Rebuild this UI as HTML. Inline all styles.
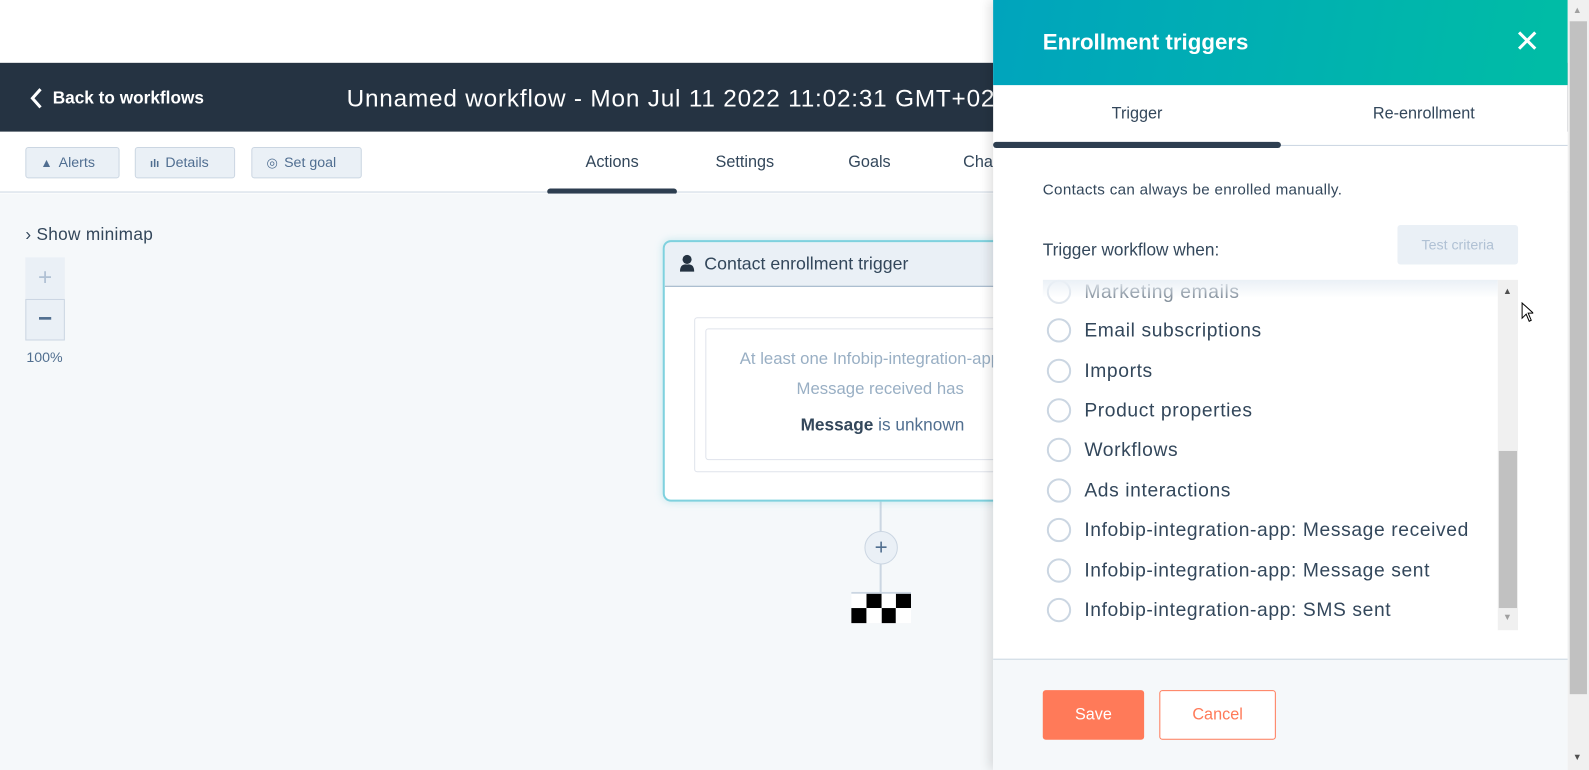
<!DOCTYPE html>
<html><head><meta charset="utf-8"><style>
*{margin:0;padding:0;box-sizing:border-box}
html,body{width:1589px;height:770px;overflow:hidden;background:#fff;font-family:"Liberation Sans",sans-serif}
#s{position:absolute;left:0;top:0;width:1568px;height:760px;transform:scale(1.01339);transform-origin:0 0;background:#fff}
.a{position:absolute}
.btn{position:absolute;top:145px;height:31px;background:#eaf0f6;border:1px solid #cbd6e2;border-radius:3px;color:#506e91;font-size:14px;line-height:29px;padding-left:14px}
.tab{position:absolute;top:152px;font-size:16px;color:#33475b;transform:translateX(-50%);white-space:nowrap}
.it{position:absolute;left:0;height:30px;font-size:19px;letter-spacing:0.6px;color:#33475b;line-height:24px}
.it i{position:absolute;left:4px;top:0;width:24px;height:24px;border:2px solid #cbd6e2;border-radius:50%}
.it span{position:absolute;left:41px;top:1px;white-space:nowrap}
</style></head><body><div id="s">
<div class="a" style="left:0;top:62px;width:1568px;height:68px;background:#253342"></div>
<svg class="a" style="left:28px;top:86px" width="16" height="22"><path d="M12 2 L4 11 L12 20" stroke="#fff" stroke-width="3" fill="none"/></svg>
<div class="a" style="left:52px;top:87px;color:#fff;font-weight:bold;font-size:17px">Back to workflows</div>
<div class="a" style="left:342px;top:84px;color:#fff;font-size:24px;letter-spacing:0.8px;white-space:nowrap">Unnamed workflow - Mon Jul 11 2022 11:02:31 GMT+02</div>
<div class="a" style="left:0;top:130px;width:1568px;height:60px;background:#fff;border-bottom:1px solid #cbd6e2"></div>
<div class="btn" style="left:25px;width:93px"><span style="font-size:12px;margin-right:6px">▲</span>Alerts</div>
<div class="btn" style="left:133px;width:99px"><span style="font-size:11px;margin-right:6px;font-weight:bold">ılı</span>Details</div>
<div class="btn" style="left:248px;width:109px"><span style="font-size:13px;margin-right:6px">◎</span>Set goal</div>
<div class="tab" style="left:604px">Actions</div>
<div class="tab" style="left:735px">Settings</div>
<div class="tab" style="left:858px">Goals</div>
<div class="tab" style="left:970px">Chart</div>
<div class="a" style="left:540px;top:186px;width:128px;height:6px;border-radius:3px;background:#2d3e50"></div>
<div class="a" style="left:0;top:191px;width:1568px;height:569px;background:#f5f8fa"></div>
<div class="a" style="left:25px;top:222px;font-size:17px;letter-spacing:0.3px;color:#33475b">› Show minimap</div>
<div class="a" style="left:25px;top:254px;width:39px;height:41px;background:#eaf0f6;color:#b0c1d4;font-size:24px;text-align:center;line-height:40px">+</div>
<div class="a" style="left:25px;top:295px;width:39px;height:41px;background:#eaf0f6;border:1px solid #cbd6e2;color:#516f90;font-size:24px;text-align:center;line-height:38px;font-weight:bold">−</div>
<div class="a" style="left:26px;top:344px;font-size:14px;color:#516f90">100%</div>
<div class="a" style="left:868px;top:495px;width:2px;height:90px;background:#cbd6e2"></div>
<div class="a" style="left:853px;top:524px;width:33px;height:33px;border-radius:50%;background:#eaf0f6;border:1px solid #cbd6e2;text-align:center;line-height:29px;font-size:22px;color:#516f90">+</div>
<svg class="a" style="left:840px;top:584px" width="59" height="31"><rect width="59" height="2" fill="#cbd6e2"/><rect x="15" y="2" width="15" height="14"/><rect x="44" y="2" width="15" height="14"/><rect x="0" y="16" width="15" height="15"/><rect x="30" y="16" width="14" height="15"/><rect x="0" y="2" width="15" height="14" fill="#fff"/><rect x="30" y="2" width="14" height="14" fill="#fff"/><rect x="15" y="16" width="15" height="15" fill="#fff"/><rect x="44" y="16" width="15" height="15" fill="#fff"/></svg>
<div class="a" style="left:654px;top:237px;width:400px;height:258px;border:2px solid #7fd1de;border-radius:8px;background:#fff;overflow:hidden;box-shadow:0 0 8px rgba(127,209,222,.4)">
 <div class="a" style="left:0;top:0;width:400px;height:44px;background:#eaf0f6;border-bottom:1px solid #99afc4"></div>
 <svg class="a" style="left:14px;top:12px" width="16" height="18"><circle cx="8" cy="5" r="4.5" fill="#253342"/><path d="M1 17 Q1 9 8 10 Q15 9 15 17 Z" fill="#253342"/></svg>
 <div class="a" style="left:39px;top:11px;font-size:17.5px;color:#33475b">Contact enrollment trigger</div>
 <div class="a" style="left:29px;top:74px;width:400px;height:153px;border:1px solid #dfe3eb;border-radius:3px"></div>
 <div class="a" style="left:40px;top:85px;width:400px;height:130px;border:1px solid #dfe3eb;border-radius:3px"></div>
 <div class="a" style="left:74px;top:106px;font-size:16.5px;color:#99afc4;white-space:nowrap">At least one Infobip-integration-app:</div>
 <div class="a" style="left:130px;top:136px;font-size:16.5px;color:#99afc4">Message received has</div>
 <div class="a" style="left:134px;top:171px;font-size:17px;color:#516f90"><b style="color:#33475b">Message</b> is unknown</div>
</div>
<div class="a" style="left:980px;top:0;width:567px;height:760px;background:#fff;box-shadow:-4px 0 10px rgba(0,0,0,.12)"></div>
<div class="a" style="left:980px;top:0;width:567px;height:84px;background:linear-gradient(100deg,#00a4bd,#00bda5)"></div>
<div class="a" style="left:1029px;top:29px;color:#fff;font-size:22px;font-weight:bold">Enrollment triggers</div>
<svg class="a" style="left:1497px;top:30px" width="20" height="20"><path d="M2 2L18 18M18 2L2 18" stroke="#fff" stroke-width="3"/></svg>
<div class="a" style="left:980px;top:143px;width:567px;height:1px;background:#cbd6e2"></div>
<div class="a" style="left:980px;top:140px;width:284px;height:6px;border-radius:3px;background:#2d3e50"></div>
<div class="tab" style="left:1122px;top:104px">Trigger</div>
<div class="tab" style="left:1405px;top:104px">Re-enrollment</div>
<div class="a" style="left:1029px;top:179px;font-size:15px;letter-spacing:0.3px;color:#33475b">Contacts can always be enrolled manually.</div>
<div class="a" style="left:1029px;top:237px;font-size:17px;color:#33475b">Trigger workflow when:</div>
<div class="a" style="left:1379px;top:222px;width:119px;height:39px;background:#eaf0f6;border-radius:3px;color:#b0c1d4;font-size:14px;text-align:center;line-height:39px">Test criteria</div>
<div class="a" style="left:1029px;top:276px;width:469px;height:346px;overflow:hidden">
 <div class="it" style="top:0px;opacity:.6"><i></i><span>Marketing emails</span></div>
 <div class="it" style="top:38px"><i></i><span>Email subscriptions</span></div>
 <div class="it" style="top:78px"><i></i><span>Imports</span></div>
 <div class="it" style="top:117px"><i></i><span>Product properties</span></div>
 <div class="it" style="top:156px"><i></i><span>Workflows</span></div>
 <div class="it" style="top:196px"><i></i><span>Ads interactions</span></div>
 <div class="it" style="top:235px"><i></i><span>Infobip-integration-app: Message received</span></div>
 <div class="it" style="top:275px"><i></i><span>Infobip-integration-app: Message sent</span></div>
 <div class="it" style="top:314px"><i></i><span>Infobip-integration-app: SMS sent</span></div>
 <div class="a" style="left:0;top:0;width:449px;height:18px;background:linear-gradient(#eaf0f6,rgba(255,255,255,0))"></div>
 <div class="a" style="left:449px;top:0;width:20px;height:346px;background:#f0f0f0"></div>
 <div class="a" style="left:450px;top:169px;width:18px;height:155px;background:#c1c1c1"></div>
 <div class="a" style="left:454px;top:6px;font-size:9px;color:#505050">▲</div>
 <div class="a" style="left:454px;top:328px;font-size:9px;color:#a0a0a0">▼</div>
</div>
<svg class="a" style="left:1501px;top:298px" width="12" height="20"><path d="M1 1L1 16L5 12L8 19L10 18L7 11L12 11Z" fill="#fff" stroke="#000"/></svg>
<div class="a" style="left:980px;top:650px;width:567px;height:110px;background:#f5f8fa;border-top:1px solid #cbd6e2"></div>
<div class="a" style="left:1029px;top:681px;width:100px;height:49px;background:#ff7a59;border-radius:3px;color:#fff;font-size:16px;text-align:center;line-height:49px">Save</div>
<div class="a" style="left:1144px;top:681px;width:115px;height:49px;background:#fff;border:1px solid #ff7a59;border-radius:3px;color:#ff7a59;font-size:16px;text-align:center;line-height:47px">Cancel</div>
<div class="a" style="left:1547px;top:0;width:21px;height:760px;background:#f0f0f0"></div>
<div class="a" style="left:1549px;top:21px;width:17px;height:664px;background:#c1c1c1"></div>
<div class="a" style="left:1552px;top:5px;font-size:9px;color:#a0a0a0">▲</div>
<div class="a" style="left:1552px;top:742px;font-size:9px;color:#505050">▼</div>
</div></body></html>
